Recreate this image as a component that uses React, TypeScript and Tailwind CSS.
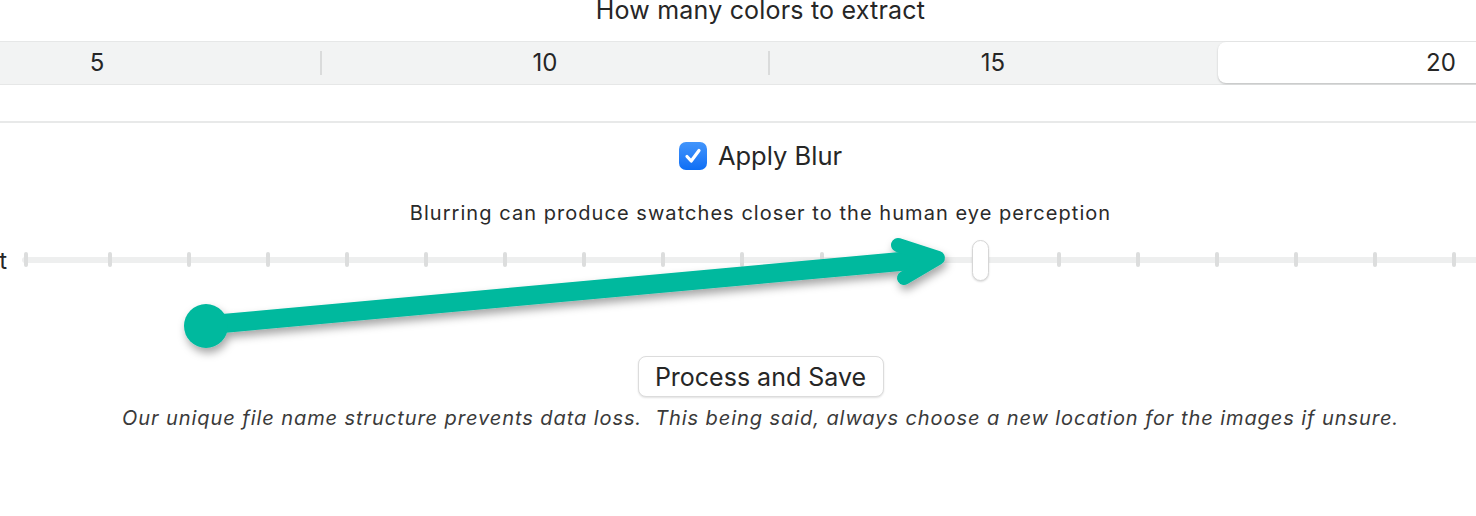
import React from "react";

const TICKS: number[] = [26, ...Array.from({ length: 19 }, (_, k) => 110 + 79.06 * k)];

function Slider() {
  const trackLeft = 22;
  return (
    <div className="flex w-full items-center h-[41px] mt-[16px]">
      <div className="shrink-0 -ml-[100px] w-[107px] text-right text-[24px] leading-[28px] text-[#262626] whitespace-nowrap">
        Amount
      </div>
      <div className="relative ml-[15px] flex-1 -mr-[120px] h-[41px]">
        <div className="absolute left-0 right-0 top-[17px] h-[6px] rounded-full bg-[#eeefef]" />
        {TICKS.map((x, i) => (
          <div
            key={i}
            className="absolute top-[12px] h-[15px] w-[4px] rounded-full bg-[#dcdddd]"
            style={{ left: x - trackLeft - 2 }}
          />
        ))}
        <div
          className="absolute top-0 h-[41px] w-[17px] rounded-full bg-white border border-[#d6d6d6] shadow-[0_1px_2px_rgba(0,0,0,0.15)]"
          style={{ left: 980 - trackLeft - 8.5 }}
        />
      </div>
    </div>
  );
}

function Segmented() {
  const labels = ["5", "10", "15", "20"];
  return (
    <div className="w-full mt-[18px] overflow-hidden">
      <div className="flex -ml-[127px] w-[1792px] h-[44px] rounded-lg bg-[#f2f3f3] border border-[#e6e7e7] items-center">
        {labels.map((l, i) => (
          <React.Fragment key={l}>
            {i > 0 && i < 3 && <div className="h-[24px] w-[2px] bg-[#dadbdb] shrink-0" />}
            {i === 3 ? (
              <div className="ml-[2px] w-[446px] shrink-0 h-[41px] mt-[-1px] flex items-center justify-center rounded-lg bg-white shadow-[0_1px_2px_rgba(0,0,0,0.22)] text-[24px] text-[#262626]">
                {l}
              </div>
            ) : (
              <div className="w-[446px] shrink-0 h-[42px] flex items-center justify-center text-[24px] text-[#262626]">
                {l}
              </div>
            )}
          </React.Fragment>
        ))}
      </div>
    </div>
  );
}

export default function App() {
  return (
    <div
      className="relative w-full h-[516px] bg-white overflow-hidden text-[#262626]"
      style={{ fontFamily: "Inter, 'Liberation Sans', sans-serif" }}
    >
      <div className="flex flex-col items-center">
        <div className="ml-[45px] -mt-[2px] text-[25px] leading-[25px] tracking-[0.2px] whitespace-nowrap">
          How many colors to extract
        </div>
        <Segmented />
        <div className="w-full h-[2px] bg-[#e8e9e9] mt-[36px]" />
        <div className="ml-[45px] flex items-center gap-[11px] mt-[19px] h-[28px]">
          <div className="w-[28px] h-[28px] rounded-[7px] bg-gradient-to-b from-[#4295fb] to-[#0c6ef5] flex items-center justify-center">
            <svg width="20" height="20" viewBox="0 0 20 20">
              <path d="M4 10.5 L8.2 15 L16 4.5" fill="none" stroke="white" strokeWidth="3.2" strokeLinecap="round" strokeLinejoin="round" />
            </svg>
          </div>
          <div className="text-[25.5px] leading-[28px] whitespace-nowrap">Apply Blur</div>
        </div>
        <div className="ml-[45px] mt-[32px] text-[20px] leading-[22px] tracking-[1.05px] whitespace-nowrap text-[#2a2a2a]">
          Blurring can produce swatches closer to the human eye perception
        </div>
        <Slider />
        <button className="ml-[45px] mt-[75px] h-[41px] w-[246px] rounded-[8px] bg-white border border-[#dcdcdc] shadow-[0_1px_2px_rgba(0,0,0,0.12)] text-[25px] leading-[28px] text-[#262626]">
          Process and Save
        </button>
        <div className="ml-[45px] mt-[9px] text-[20px] leading-[24px] italic tracking-[0.93px] whitespace-pre text-[#3a3a3a]">
          {"Our unique file name structure prevents data loss.  This being said, always choose a new location for the images if unsure."}
        </div>
      </div>
      <svg className="absolute inset-0 pointer-events-none" width="1476" height="516" viewBox="0 0 1476 516">
        <defs>
          <filter id="sh" x="-10%" y="-50%" width="120%" height="200%">
            <feDropShadow dx="2" dy="5" stdDeviation="4" floodColor="#000" floodOpacity="0.35" />
          </filter>
        </defs>
        <g filter="url(#sh)" fill="#00b99e" stroke="#00b99e">
          <line x1="206" y1="325" x2="928" y2="259" strokeWidth="19" strokeLinecap="round" />
          <polyline points="898,245 938,258 904,278" fill="none" strokeWidth="14" strokeLinecap="round" strokeLinejoin="round" />
          <circle cx="206" cy="326" r="22" stroke="none" />
        </g>
      </svg>
    </div>
  );
}
